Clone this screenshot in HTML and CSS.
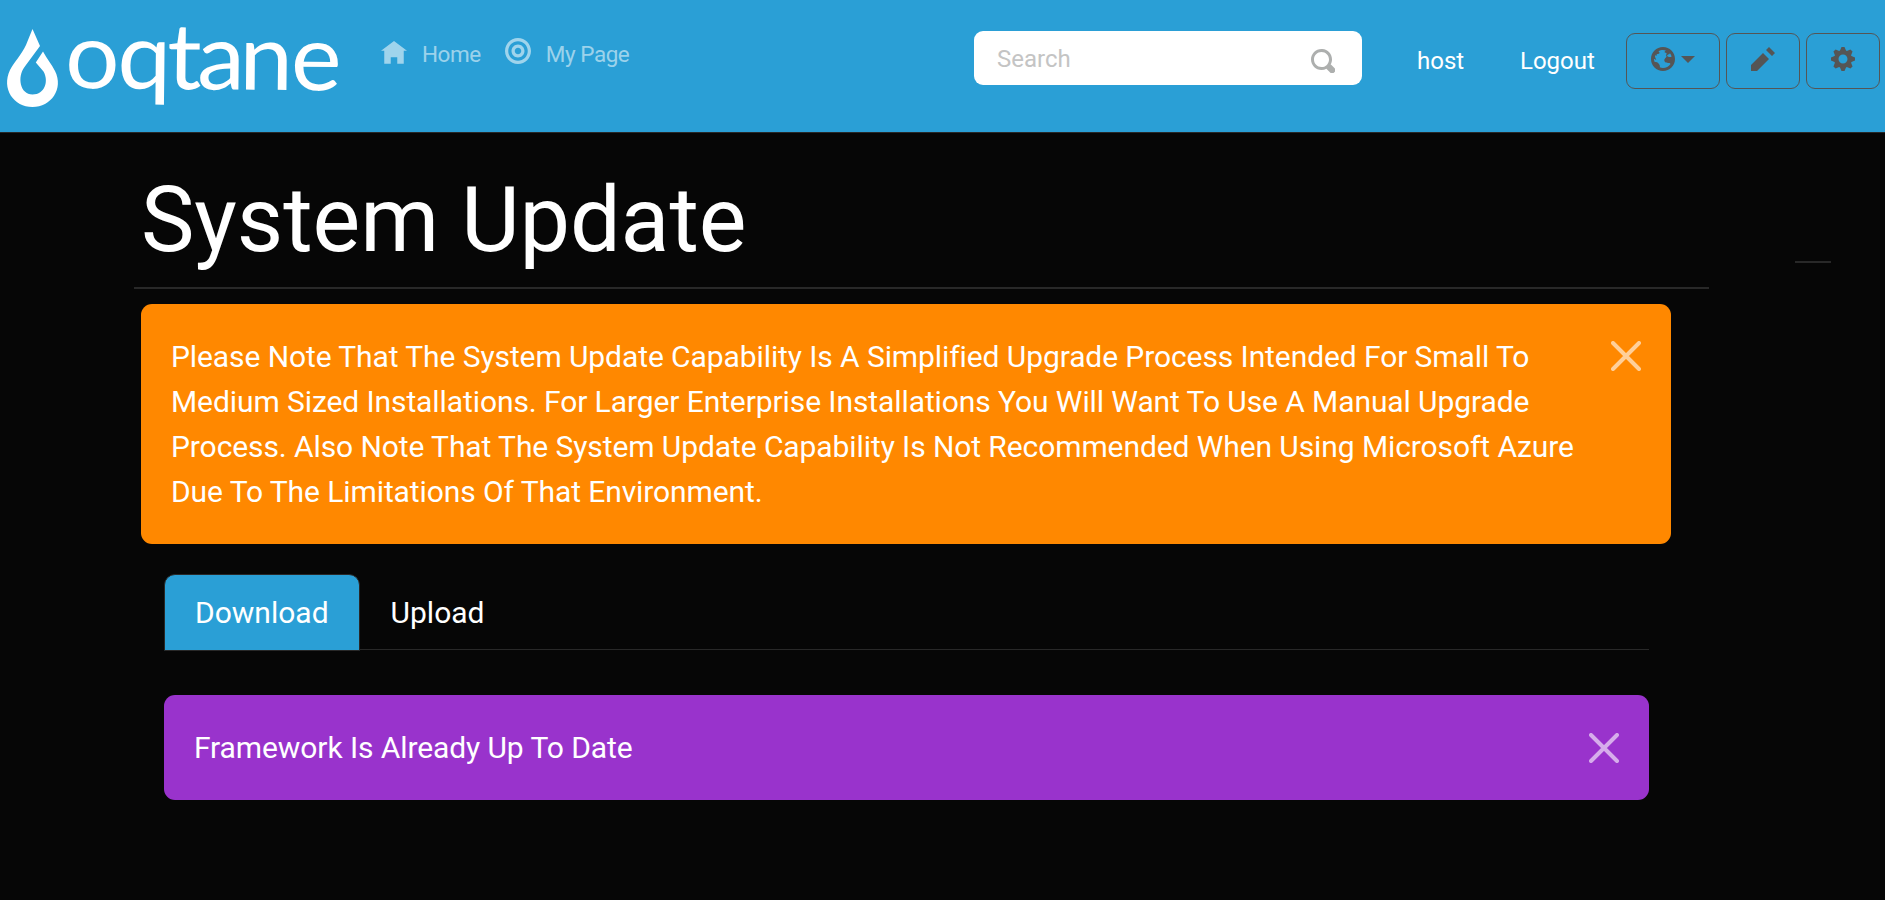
FILE: index.html
```html
<!DOCTYPE html>
<html lang="en">
<head>
<meta charset="utf-8">
<title>System Update</title>
<link rel="stylesheet" href="styles.css">
</head>
<body>
<header class="topbar">
  <a class="brand" aria-label="oqtane">
    <svg width="346" height="132" viewBox="0 0 346 132">
      <path d="M32.5 29L40 46 24.500 67C17 77 20 94.500 32.500 94.500C45 94.500 49 81 43.500 71.500L35.800 62.500L43 51.500C47 59 51.500 64 55 71C64 89 51 107 32.500 107C14 107 1 89 10 70C14 62 22 54 26 45Z"/>
      <text class="wordmark" x="62.500 112.800 160.600 189.500 230 279.500" y="88" transform="rotate(.5 66 88) scale(1.040 1)">oqtane</text>
    </svg>
  </a>
  <nav class="menu">
    <a class="menu-link"><svg class="oi-menu oi-home" viewBox="0 0 8 8"><path d="M4 0l-4 3h1v4h2v-2h2v2h2v-4.030l1 .03-4-3z"/></svg>Home</a>
    <a class="menu-link"><svg class="oi-menu oi-target" viewBox="0 0 8 8"><path d="M4 0c-2.200 0-4 1.800-4 4s1.800 4 4 4 4-1.800 4-4-1.800-4-4-4zm0 1c1.660 0 3 1.340 3 3s-1.340 3-3 3-3-1.340-3-3 1.340-3 3-3zm0 1c-1.100 0-2 .9-2 2s.9 2 2 2 2-.9 2-2-.9-2-2-2zm0 1c.56 0 1 .44 1 1s-.44 1-1 1-1-.44-1-1 .44-1 1-1z"/></svg>My Page</a>
  </nav>
  <div class="search"><span>Search</span>
    <svg class="oi" viewBox="0 0 8 8"><path d="M3.500 0c-1.930 0-3.500 1.570-3.500 3.500s1.570 3.500 3.500 3.500c.59 0 1.170-.14 1.660-.41a1 1 0 0 0 .13.13l1 1a1.020 1.020 0 1 0 1.440-1.440l-1-1a1 1 0 0 0-.16-.13c.27-.49.44-1.060.44-1.660 0-1.930-1.550-3.500-3.500-3.500zm0 1c1.390 0 2.500 1.110 2.500 2.500 0 .66-.24 1.270-.66 1.720-.01.01-.02.02-.03.03a1 1 0 0 0-.13.13c-.44.4-1.040.63-1.690.63-1.390 0-2.500-1.110-2.500-2.500s1.110-2.500 2.500-2.500z"/></svg>
  </div>
  <a class="user">host</a>
  <a class="logout">Logout</a>
  <div class="controls">
    <button class="btn btn-wide"><svg class="oi" viewBox="0 0 8 8"><path d="M4 0c-2.200 0-4 1.800-4 4s1.800 4 4 4 4-1.800 4-4-1.800-4-4-4zm0 1c.33 0 .64.09.94.19-.21.2-.45.38-.41.56.04.18.69.13.69.5 0 .27-.42.35-.13.66.35.35-.64.98-.66 1.440-.03.83.84.97 1.530.97.42 0 .53.2.5.44-.54.77-1.460 1.250-2.470 1.250-.38 0-.73-.09-1.060-.22.22-.44-.28-1.310-.75-1.590-.23-.23-.72-.14-1-.25-.09-.27-.18-.54-.19-.84.03-.05.08-.09.16-.09.19 0 .45.38.59.34.18-.04-.74-1.310-.31-1.560.2-.12.6.39.47-.16-.12-.51.36-.28.66-.41.26-.11.45-.41.13-.59-.06-.03-.13-.1-.22-.19.45-.27.97-.44 1.530-.44zm2.310 1.090c.18.22.32.460.43.720.04.120.09.230.13.340-.3.280-.45.190-.81.160-.41-.03-.9-.33-.6-.62.220-.22.650-.22.850-.6z"/></svg><i class="caret"></i></button>
    <button class="btn"><svg class="oi" viewBox="0 0 8 8"><path d="M6 0l-1 1 2 2 1-1-2-2zm-2 2l-4 4v2h2l4-4-2-2z"/></svg></button>
    <button class="btn"><svg class="oi" viewBox="0 0 8 8"><path d="M3.500 0l-.5 1.190c-.1.03-.19.08-.28.13l-1.190-.5-.72.72.5 1.190c-.05.1-.09.18-.13.28l-1.190.5v1l1.190.5c.04.1.08.18.13.28l-.5 1.190.72.72 1.190-.5c.09.04.18.09.28.13l.5 1.190h1l.5-1.190c.09-.04.19-.08.28-.13l1.190.5.72-.72-.5-1.190c.04-.09.09-.19.13-.28l1.190-.5v-1l-1.190-.5c-.03-.09-.08-.19-.13-.28l.5-1.190-.72-.72-1.190.5c-.09-.04-.19-.09-.28-.13l-.5-1.190h-1zm.5 2.500c.83 0 1.500.67 1.500 1.500s-.67 1.500-1.500 1.500-1.500-.67-1.500-1.500.67-1.500 1.500-1.500z"/></svg></button>
  </div>
</header>
<div class="page">
  <main class="content">
    <h1 class="title">System Update</h1>
    <div class="alert alert-warning">
      <p>Please Note That The System Update Capability Is A Simplified Upgrade Process Intended For Small To Medium Sized Installations. For Larger Enterprise Installations You Will Want To Use A Manual Upgrade Process. Also Note That The System Update Capability Is Not Recommended When Using Microsoft Azure Due To The Limitations Of That Environment.</p>
      <svg class="close" viewBox="0 0 30 30"><path d="M2 2L28 28M28 2L2 28"/></svg>
    </div>
    <div class="panel">
      <div class="tabs"><a class="tab active">Download</a><a class="tab">Upload</a></div>
      <div class="alert alert-info">
        <p>Framework Is Already Up To Date</p>
        <svg class="close" viewBox="0 0 30 30"><path d="M2 2L28 28M28 2L2 28"/></svg>
      </div>
    </div>
  </main>
  <aside class="side"><div class="side-rule"></div></aside>
</div>
</body>
</html>
```
FILE: styles.css
```css
* { box-sizing: border-box; }
body { margin: 0; height: 900px; overflow: hidden; background: #060606; color: #fff; font: 30px/45px Roboto, sans-serif; }
.topbar { display: flex; align-items: flex-start; height: 133px; background: #2a9fd6; border-bottom: 1px solid #282828; font-size: 24px; line-height: 36px; }
.brand { width: 346px; height: 132px; flex: none; }
.brand svg { display: block; overflow: visible; fill: #fff; }
.wordmark { font: 92px Lato, sans-serif; }
.menu { display: flex; padding: 37px 0 0 35px; width: 628px; flex: none; font-size: 22.5px; line-height: 34px; letter-spacing: -.45px; color: rgba(255,255,255,.55); fill: currentColor; }
.menu-link { display: flex; }
.menu-link + .menu-link { margin-left: 24px; }
.oi-menu { width: 26px; height: 26px; margin-right: 15px; }
.oi-home { margin-top: 4px; }
.oi-target { margin-top: 1px; }
.search { display: flex; justify-content: space-between; align-items: flex-start; flex: none; width: 388px; height: 54px; margin-top: 31px; padding: 10px 27px 0 23px; border-radius: 9px; background: #fff; color: #c4c4c4; }
.search .oi { margin-top: 8px; fill: #adafae; }
.oi { width: 24px; height: 24px; flex: none; }
.user, .logout { margin-top: 43px; flex: none; }
.user { margin-left: 55px; width: 103px; }
.logout { width: 106px; }
.controls { display: flex; gap: 6px; padding-top: 33px; }
.btn { display: flex; align-items: flex-start; width: 74px; height: 56px; padding: 13px 24px; border: 1px solid #555; border-radius: 9px; background: transparent; fill: #555; }
.btn-wide { width: 94px; }
.caret { flex: none; margin: 9px 0 0 6px; border: 7px solid transparent; border-top-color: #555; border-bottom: 0; }
.page { display: flex; }
.content { width: 1709px; padding-left: 134px; padding-top: 30px; }
.title { margin: 0; height: 126px; padding: 4px 0 0 7px; border-bottom: 2px solid #282828; font-size: 90px; line-height: 108px; font-weight: 400; letter-spacing: -.1px; }
.alert { display: flex; justify-content: space-between; padding: 30px; border-radius: 11px; }
.alert p { margin: 0; letter-spacing: -.09px; }
.alert-warning { margin: 15px 38px 0 7px; height: 240px; background: #f80; }
.alert-warning p { width: 1420px; }
.alert-info { height: 105px; margin-top: 45px; background: #93c; }
.alert-info .close { margin-top: 8px; }
.close { width: 30px; height: 30px; margin-top: 7px; flex: none; fill: none; stroke: rgba(255,255,255,.6); stroke-width: 4; stroke-linecap: round; }
.panel { margin: 30px 60px 0 30px; }
.tabs { display: flex; height: 76px; border-bottom: 1px solid #282828; }
.tab { height: 77px; padding: 15px 30px; border: 1px solid transparent; }
.active { background: #2a9fd6; border-color: #282828; border-radius: 11px 11px 0 0; }
.side { padding: 128px 0 0 86px; }
.side-rule { width: 36px; height: 2px; background: #282828; }
```
